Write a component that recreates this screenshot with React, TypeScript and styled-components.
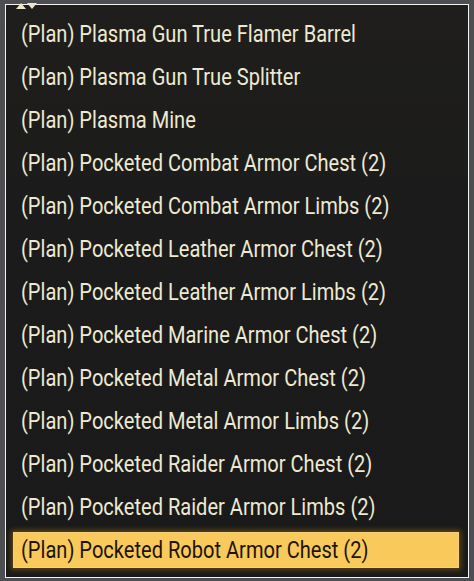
import styled, { createGlobalStyle } from "styled-components";

const items = [
  "(Plan) Plasma Gun True Flamer Barrel",
  "(Plan) Plasma Gun True Splitter",
  "(Plan) Plasma Mine",
  "(Plan) Pocketed Combat Armor Chest (2)",
  "(Plan) Pocketed Combat Armor Limbs (2)",
  "(Plan) Pocketed Leather Armor Chest (2)",
  "(Plan) Pocketed Leather Armor Limbs (2)",
  "(Plan) Pocketed Marine Armor Chest (2)",
  "(Plan) Pocketed Metal Armor Chest (2)",
  "(Plan) Pocketed Metal Armor Limbs (2)",
  "(Plan) Pocketed Raider Armor Chest (2)",
  "(Plan) Pocketed Raider Armor Limbs (2)",
  "(Plan) Pocketed Robot Armor Chest (2)",
];

const selectedIndex = items.length - 1;

const GlobalStyle = createGlobalStyle`
  html, body {
    margin: 0;
    padding: 0;
    background: #4c4e52;
  }
  body {
    width: 474px;
    height: 581px;
    overflow: hidden;
    font-family: Roboto, "Liberation Sans", sans-serif;
  }
`;

const App = () => {
  return (
    <>
      <GlobalStyle />
      <Panel>
        <ScrollArrows>
          <svg width="22" height="6" viewBox="0 0 22 6">
            <polygon points="0,6 5,0 10,6" fill="#ece6c6" />
            <polygon points="11,0 21,0 16,6" fill="#ece6c6" />
          </svg>
        </ScrollArrows>
        <List>
          {items.map((label, i) => (
            <Row key={label} $selected={i === selectedIndex}>
              <Label>{label}</Label>
            </Row>
          ))}
        </List>
      </Panel>
    </>
  );
};

const Panel = styled.div`
  position: relative;
  box-sizing: border-box;
  margin: 4px 0 0 5px;
  width: 464px;
  height: 574px;
  border: 1.5px solid #f2f2f2;
  background: linear-gradient(180deg, #1f1e1c 0%, #1b1b1b 40%, #1a1a1a 100%);
`;

const ScrollArrows = styled.div`
  position: absolute;
  top: -2px;
  left: 10px;
  line-height: 0;
`;

const List = styled.div`
  display: flex;
  flex-direction: column;
  gap: 7px;
  padding: 10.5px 9px 0 7px;
`;

const Row = styled.div<{ $selected: boolean }>`
  height: 36px;
  display: flex;
  align-items: center;
  padding-left: 7px;
  box-sizing: border-box;
  color: ${(p) => (p.$selected ? "#1c1408" : "#ede9d2")};
  background: ${(p) => (p.$selected ? "#f9c95b" : "transparent")};
  border: 1px solid ${(p) => (p.$selected ? "#f6d27c" : "transparent")};
  box-shadow: ${(p) =>
    p.$selected ? "0 0 5px 2px rgba(150, 105, 20, 0.55)" : "none"};
`;

const Label = styled.span`
  display: inline-block;
  font-size: 24px;
  white-space: nowrap;
  transform: scaleX(0.836);
  transform-origin: left center;
`;

export default App;
